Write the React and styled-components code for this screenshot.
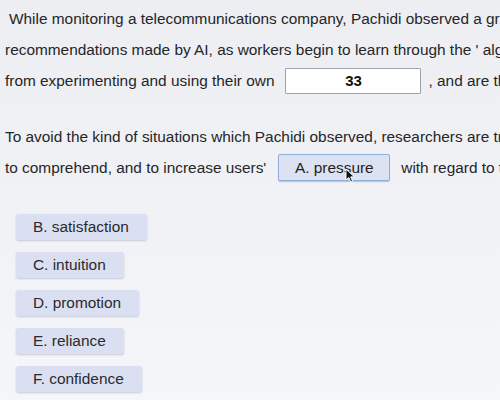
import React from "react";
import styled, { createGlobalStyle } from "styled-components";

const options = ["B. satisfaction", "C. intuition", "D. promotion", "E. reliance", "F. confidence"];

const GlobalStyle = createGlobalStyle`
  html, body {
    margin: 0;
    padding: 0;
    width: 500px;
    height: 400px;
    overflow: hidden;
    background: linear-gradient(180deg, #eceef2 0%, #f1f2f6 55%, #f5f6f9 100%);
  }
`;

const Page = styled.div`
  width: 500px;
  height: 400px;
  overflow: hidden;
  font-family: "Liberation Sans", Arial, sans-serif;
  font-size: 15.4px;
  color: #262628;
  padding: 3px 0 0 5px;
  box-sizing: border-box;
`;

const Paragraph = styled.div`
  display: flex;
  flex-direction: column;
  margin-bottom: ${(p) => p.$gap || 0}px;
`;

const Line = styled.div`
  display: flex;
  align-items: center;
  height: 31px;
  white-space: nowrap;
  padding-left: ${(p) => p.$indent || 0}px;
`;

const Blank = styled.div`
  width: 134px;
  height: 24px;
  margin: 0 7px 0 11px;
  border: 1px solid #9da3ad;
  border-radius: 1px;
  background: #fff;
  display: flex;
  align-items: center;
  justify-content: center;
  font-weight: bold;
  font-size: 15px;
  color: #111;
  flex-shrink: 0;
`;

const Filled = styled.div`
  position: relative;
  width: 110px;
  height: 25px;
  margin: 0 11px 0 12px;
  border: 1px solid #8fb0d9;
  border-radius: 2px;
  background: #dce2f1;
  box-shadow: 0 1px 1px rgba(90, 100, 130, 0.35);
  display: flex;
  align-items: center;
  justify-content: center;
  color: #1f1f22;
  flex-shrink: 0;
`;

const Cursor = styled.svg`
  position: absolute;
  left: 66px;
  top: 13px;
`;

const Options = styled.div`
  display: flex;
  flex-direction: column;
  align-items: flex-start;
  gap: 12px;
  padding: 2px 0 0 11px;
`;

const Chip = styled.div`
  height: 26px;
  padding: 0 18px 0 17px;
  display: flex;
  align-items: center;
  background: #dae0f1;
  border-radius: 3px;
  box-shadow: 0 1px 2px rgba(110, 120, 150, 0.35);
  color: #2a2a2e;
`;

const App = () => {
  return (
    <Page>
      <GlobalStyle />
      <Paragraph $gap={25}>
        <Line $indent={4}>While monitoring a telecommunications company, Pachidi observed a gr</Line>
        <Line>recommendations made by AI, as workers begin to learn through the ' alg</Line>
        <Line>
          from experimenting and using their own
          <Blank>33</Blank>, and are th
        </Line>
      </Paragraph>
      <Paragraph $gap={29}>
        <Line>To avoid the kind of situations which Pachidi observed, researchers are tr</Line>
        <Line>
          to comprehend, and to increase users'
          <Filled>
            A. pressure
            <Cursor width="11" height="15" viewBox="0 0 11 15">
              <path d="M1 1 L1 12 L3.8 9.6 L5.8 14 L7.6 13.2 L5.7 8.9 L9.4 8.9 Z" fill="#111" stroke="#fff" strokeWidth="1" />
            </Cursor>
          </Filled>
          with regard to t
        </Line>
      </Paragraph>
      <Options>
        {options.map((o) => (
          <Chip key={o}>{o}</Chip>
        ))}
      </Options>
    </Page>
  );
};

export default App;
